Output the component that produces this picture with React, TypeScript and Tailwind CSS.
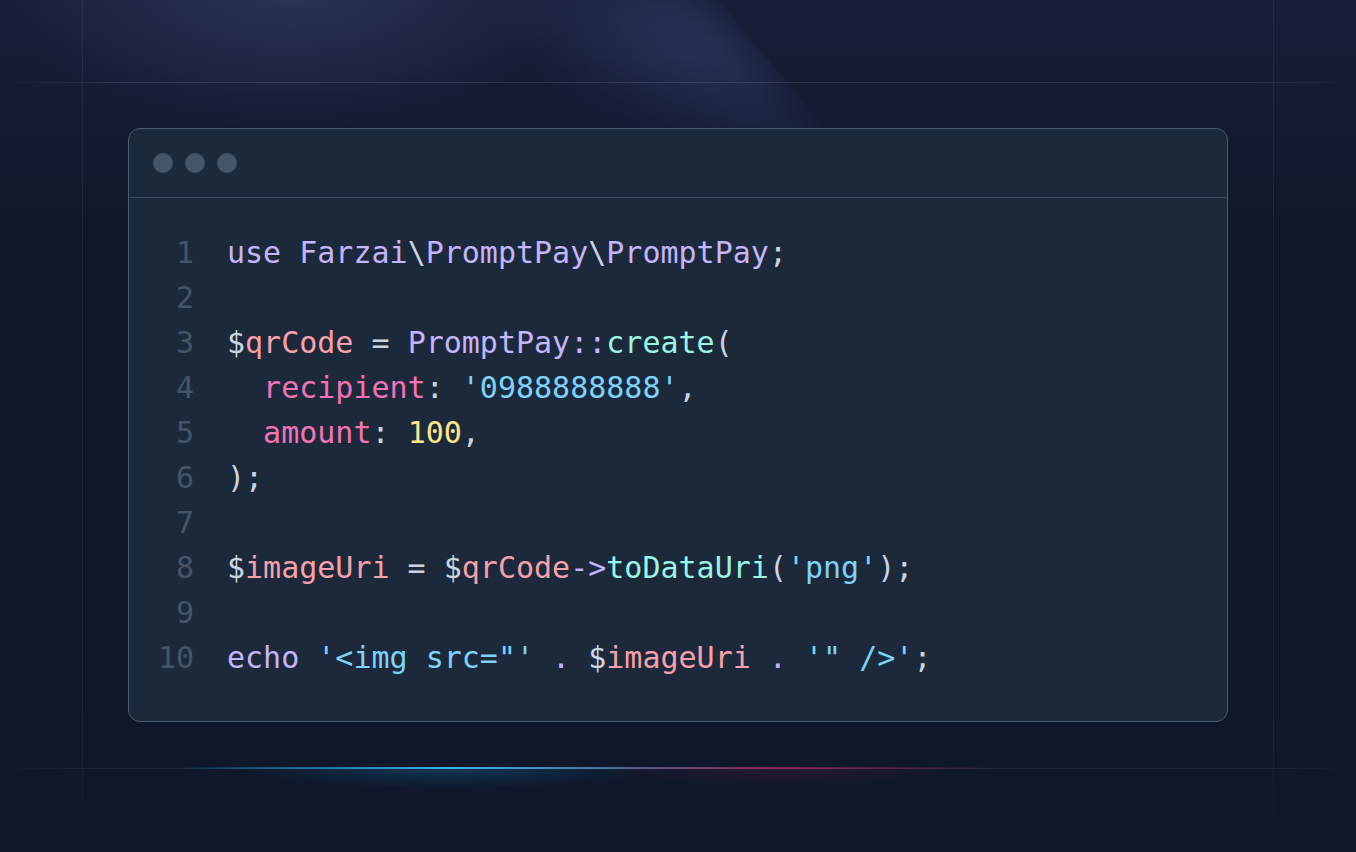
import React from "react";

type Tok = [string, string];

const C = {
  kw: "text-[#c4b5fd]",
  pk: "text-[#f9a0aa]",
  prop: "text-[#f472b6]",
  str: "text-[#7dd3fc]",
  num: "text-[#fde68a]",
  fn: "text-[#99f6e4]",
  p: "text-[#cbd5e1]",
};

const lines: Tok[][] = [
  [
    ["use Farzai", C.kw],
    ["\\", C.p],
    ["PromptPay", C.kw],
    ["\\", C.p],
    ["PromptPay", C.kw],
    [";", C.p],
  ],
  [],
  [
    ["$", C.p],
    ["qrCode", C.pk],
    [" = ", C.p],
    ["PromptPay::", C.kw],
    ["create", C.fn],
    ["(", C.p],
  ],
  [
    ["  recipient", C.prop],
    [": ", C.p],
    ["'0988888888'", C.str],
    [",", C.p],
  ],
  [
    ["  amount", C.prop],
    [": ", C.p],
    ["100", C.num],
    [",", C.p],
  ],
  [[");", C.p]],
  [],
  [
    ["$", C.p],
    ["imageUri", C.pk],
    [" = ", C.p],
    ["$", C.p],
    ["qrCode", C.pk],
    ["->", C.kw],
    ["toDataUri", C.fn],
    ["(", C.p],
    ["'png'", C.str],
    [");", C.p],
  ],
  [],
  [
    ["echo ", C.kw],
    ["'<img src=\"'", C.str],
    [" . ", C.kw],
    ["$", C.p],
    ["imageUri", C.pk],
    [" . ", C.kw],
    ["'\" />'", C.str],
    [";", C.p],
  ],
];

export default function App() {
  return (
    <div className="relative min-h-[852px] w-full overflow-hidden bg-[#0f172a]">
      {/* top light */}
      <div className="pointer-events-none absolute inset-x-0 top-0 h-[240px] bg-[linear-gradient(180deg,rgba(40,48,80,0.35),transparent)]" />
      <div className="pointer-events-none absolute left-0 top-0 h-[260px] w-[900px] bg-[radial-gradient(ellipse_380px_190px_at_290px_-10px,rgba(62,70,118,0.5),transparent_75%)]" />
      <div className="pointer-events-none absolute left-[470px] top-[-10px] h-[190px] w-[240px] origin-top skew-x-[40deg] blur-xl bg-[linear-gradient(90deg,transparent,rgba(50,62,110,0.45)_55%,rgba(55,68,118,0.55)_85%,transparent)] [mask-image:linear-gradient(180deg,black,black_35%,transparent)]" />

      {/* grid lines */}
      <div className="pointer-events-none absolute left-0 top-[82px] h-px w-full bg-[linear-gradient(90deg,transparent,rgba(255,255,255,0.1)_8%,rgba(255,255,255,0.1)_92%,transparent)]" />
      <div className="pointer-events-none absolute left-0 top-[768px] h-px w-full bg-[linear-gradient(90deg,transparent,rgba(255,255,255,0.08)_8%,rgba(255,255,255,0.08)_92%,transparent)]" />
      <div className="pointer-events-none absolute left-[82px] top-0 h-[840px] w-px bg-[linear-gradient(180deg,rgba(255,255,255,0.06),rgba(255,255,255,0.06)_85%,transparent)]" />
      <div className="pointer-events-none absolute left-[1273px] top-0 h-[840px] w-px bg-[linear-gradient(180deg,rgba(255,255,255,0.06),rgba(255,255,255,0.06)_85%,transparent)]" />

      {/* bottom glow */}
      <div className="pointer-events-none absolute left-[180px] top-[767px] h-[2px] w-[820px] bg-[linear-gradient(90deg,transparent,rgba(14,165,233,0.35)_8%,rgba(56,189,248,0.95)_33%,rgba(140,140,185,0.55)_57%,rgba(219,39,119,0.55)_72%,transparent)]" />
      <div className="pointer-events-none absolute left-[180px] top-[768px] h-[40px] w-[820px] bg-[radial-gradient(ellipse_260px_26px_at_270px_0px,rgba(14,165,233,0.22),transparent_80%),radial-gradient(ellipse_220px_22px_at_600px_0px,rgba(219,39,119,0.12),transparent_80%)]" />

      <div className="relative flex justify-center px-32 pt-32 pb-[130px]">
        <div className="w-full overflow-hidden rounded-xl border border-[#4b5b70] bg-[#1c293b]">
          <div className="flex h-[69px] items-center gap-3 border-b border-[#3b4a5e] pl-[24px]">
            <span className="h-5 w-5 rounded-full bg-[#475569]" />
            <span className="h-5 w-5 rounded-full bg-[#475569]" />
            <span className="h-5 w-5 rounded-full bg-[#475569]" />
          </div>
          <div
            className="pt-[32px] pb-[41px] text-[30px] leading-[45px] whitespace-pre"
            style={{ fontFamily: '"DejaVu Sans Mono", "Liberation Mono", monospace' }}
          >
            {lines.map((toks, i) => (
              <div key={i} className="flex">
                <span className="w-[65px] text-right text-[#465467]">{i + 1}</span>
                <span className="pl-[33px]">
                  {toks.map(([t, c], j) => (
                    <span key={j} className={c}>
                      {t}
                    </span>
                  ))}
                </span>
              </div>
            ))}
          </div>
        </div>
      </div>
    </div>
  );
}
